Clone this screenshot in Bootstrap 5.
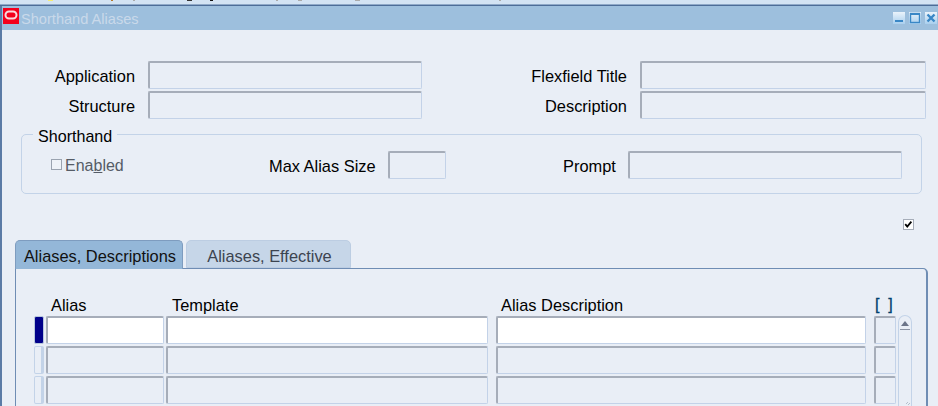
<!DOCTYPE html>
<html lang="en"><head><meta charset="utf-8"><title>Shorthand Aliases</title>
<link href="https://cdn.jsdelivr.net/npm/bootstrap@5.3.0/dist/css/bootstrap.min.css" rel="stylesheet">
<style>
html,body{height:406px;overflow:hidden;background:#e9eef6;margin:0}
body{font-family:"Liberation Sans",Arial,sans-serif;font-size:16.4px;line-height:20px;color:#000}
.topstrip{height:4px;background-color:#d3e3f3;background-image:linear-gradient(#f7ec70,#f7ec70),linear-gradient(#b5792a,#b5792a),linear-gradient(#aaa,#aaa),linear-gradient(#333,#333),linear-gradient(#111,#111),linear-gradient(#aaa,#aaa),linear-gradient(#aaa,#aaa),linear-gradient(#aaa,#aaa),linear-gradient(#aaa,#aaa);background-repeat:no-repeat;background-size:5px 1px,2px 1px,2px 1px,5px 1px,3px 1px,2px 1px,4px 1px,5px 1px,2px 1px;background-position:48px 0,111px 0,133px 0,187px 0,210px 0,276px 0,298px 0,355px 0,499px 0}
.topline{height:2px;background:linear-gradient(#8fa9c8 50%,#4d6d98 50%)}
.win{height:400px;border-left:2px solid #5b7ba6;overflow:hidden}
.titlebar{height:24px;background:#9dbfdd;padding-right:1px}
.titlebar .ttl{color:#c9d9ea;margin-left:2px;font-size:14.6px;line-height:24px;padding-top:1px}
.logo{width:16px;height:16px;background:#f4001c;margin-left:1px;margin-top:-4px;display:block;flex:none}
.wbtn{width:12px;height:12px;display:block;flex:none;background:linear-gradient(#eaf3fb,#a9cfee)}
.wbtns{gap:4px}
.fld{display:block;height:28px;border:1px solid;border-color:#a6adb9 #c3d2e8 #c3d2e8 #a6adb9;border-width:2px 1px 2px 2px;border-bottom-width:1px;border-radius:2px;background:#e9eef6;padding:0;box-shadow:none}
.fld.form-control:focus{background:#e9eef6;border-color:#a6adb9 #c3d2e8 #c3d2e8 #a6adb9;box-shadow:none}
.hdrform{display:grid;grid-template-columns:120px 274px 192px 286px;column-gap:13px;row-gap:2px;padding:31px 0 0 13px;align-items:center}
.hdrform .lbl{text-align:right;padding-top:2px}
.grp{margin:15px 16px 0 19px;height:60px;border:1px solid #c3d3e8;border-radius:5px;position:relative;padding:16px 0 0 29px}
.grp .leg{position:absolute;left:11px;top:-8px;padding:0 5px;background:#e9eef6;line-height:18px;font-size:16.1px}
.txt30{line-height:30px;flex:none}
.chk{width:11px;height:11px;border:1px solid #9aa3b0;background:#eef2f8;display:block;flex:none;margin-top:8px;margin-right:3px}
.dis{color:#555c66;font-size:16px}
.enb{width:218px}
.maxl{width:119px}
.promptl{width:65px;margin-left:117px}
.fw58{width:58px;flex:none}
.fw274{width:274px;flex:none}
.tickrow{padding:25px 0 0 901px;height:46px}
.tick{width:11px;height:11px;border:1px solid #a6adb9;background:#fff;display:block}
.tabsrow{margin-left:13px;height:29px;gap:3px;position:relative;z-index:1}
.tabx{height:29px;border:1px solid #7e9cbf;border-bottom:0;border-radius:5px 5px 0 0;background:#94b7d8;width:168px;text-align:center;line-height:31px;color:#111;padding-left:2px}
.tabx.off{width:165px;height:28px;background:#c6d6e8;border-color:#bccde2;color:#3c4450;border-bottom:1px solid #bccde2}
.pnl{margin:-1px 10px 0 13px;height:140px;border:1px solid #6f8db4;border-right-width:2px;border-radius:0 5px 0 0;padding:26px 0 0 19px;position:relative}
.colhd,.trow{display:grid;grid-template-columns:9px 118px 322px 376px 28px;column-gap:2px}
.colhd{height:21px;line-height:20px}
.colhd>span{padding-left:5px}
.colhd>span.tpl{padding-left:6px}
.trow{margin-bottom:2px}
.c-desc{margin-left:6px}
.fw370{width:370px}
.c-sm{margin-left:6px;width:22px}
.ind{height:28px;width:10px;margin-left:-1px;border:1px solid #c3d3e8;border-right:3px solid #c3d3e8;border-radius:2px}
.ind.on{background:#00008a;border:1px solid #b7c7dd}
.fld.cur{background:#fff}
.fld.cur.form-control:focus{background:#fff}
.colhd>span.brk{color:#00416f;padding-left:1px;margin-left:6px;font-size:16px;white-space:pre;-webkit-text-stroke:.3px #00416f}
.scr{position:absolute;left:882px;top:46px;width:14px;height:94px;border:1px solid #c3d3e8;border-bottom:0;border-radius:7px 7px 0 0}
.scr i{display:block;width:0;height:0;border:4px solid transparent;border-top:0;border-bottom:5px solid #6b7488;margin:5px auto 3px}
.scr b{display:block;height:1px;background:#8b93a3;margin:0 1px}
.grip{position:absolute;left:2px;bottom:0;width:10px;height:7px;display:block}
</style></head>
<body>
<div class="topstrip"></div><div class="topline"></div>
<div class="win">
 <div class="titlebar d-flex align-items-center justify-content-between">
  <div class="d-flex align-items-center">
   <svg class="logo" viewBox="0 0 16 16"><rect x="2.500" y="3.500" width="11" height="7" rx="3.500" fill="none" stroke="#fbd9dc" stroke-width="2"/></svg>
   <span class="ttl">Shorthand Aliases</span>
  </div>
  <div class="d-flex wbtns">
   <svg class="wbtn" viewBox="0 0 12 12"><rect x="2" y="8" width="8" height="2" fill="#3a87c6"/></svg>
   <svg class="wbtn" viewBox="0 0 12 12"><rect x="1.500" y="1.500" width="9" height="9" fill="none" stroke="#3a87c6" stroke-width="1.400"/><rect x="1" y="1" width="10" height="2" fill="#3a87c6"/></svg>
   <svg class="wbtn" viewBox="0 0 12 12"><path d="M2.500 2.500l7 7M9.500 2.500l-7 7" stroke="#3a87c6" stroke-width="2.400"/></svg>
  </div>
 </div>
 <div class="hdrform">
  <span class="lbl">Application</span><input class="form-control fld" aria-label="Application">
  <span class="lbl">Flexfield Title</span><input class="form-control fld" aria-label="Flexfield Title">
  <span class="lbl">Structure</span><input class="form-control fld" aria-label="Structure">
  <span class="lbl">Description</span><input class="form-control fld" aria-label="Description">
 </div>
 <div class="grp d-flex align-items-start">
  <span class="leg">Shorthand</span>
  <div class="enb d-flex align-items-start"><span class="chk"></span><span class="dis txt30">Ena<u>b</u>led</span></div>
  <span class="maxl txt30">Max Alias Size</span><input class="form-control fld fw58" aria-label="Max Alias Size">
  <span class="promptl txt30">Prompt</span><input class="form-control fld fw274" aria-label="Prompt">
 </div>
 <div class="tickrow"><svg class="tick" viewBox="0 0 11 11"><path d="M1.500 5l2.500 3 5-6" fill="none" stroke="#000" stroke-width="2.200"/></svg></div>
 <div class="tabsrow d-flex">
  <div class="tabx">Aliases, Descriptions</div><div class="tabx off">Aliases, Effective</div>
 </div>
 <div class="pnl">
  <div class="colhd"><span></span><span>Alias</span><span class="tpl">Template</span><span class="c-desc">Alias Description</span><span class="brk">[  ]</span></div>
  <div class="trow"><div class="ind on"></div><input class="form-control fld cur" aria-label="Alias"><input class="form-control fld cur" aria-label="Template"><input class="form-control fld cur c-desc fw370" aria-label="Alias Description"><div class="fld c-sm"></div></div>
  <div class="trow"><div class="ind"></div><input class="form-control fld" aria-label="Alias"><input class="form-control fld" aria-label="Template"><input class="form-control fld c-desc fw370" aria-label="Alias Description"><div class="fld c-sm"></div></div>
  <div class="trow"><div class="ind"></div><input class="form-control fld" aria-label="Alias"><input class="form-control fld" aria-label="Template"><input class="form-control fld c-desc fw370" aria-label="Alias Description"><div class="fld c-sm"></div></div>
  <div class="scr"><i></i><b></b><svg class="grip" viewBox="0 0 10 7"><path d="M0 7l2-2M5 2l2-2M7 3l2-2" stroke="#b5bfcc" fill="none"/></svg></div>
 </div>
</div>
</body></html>
